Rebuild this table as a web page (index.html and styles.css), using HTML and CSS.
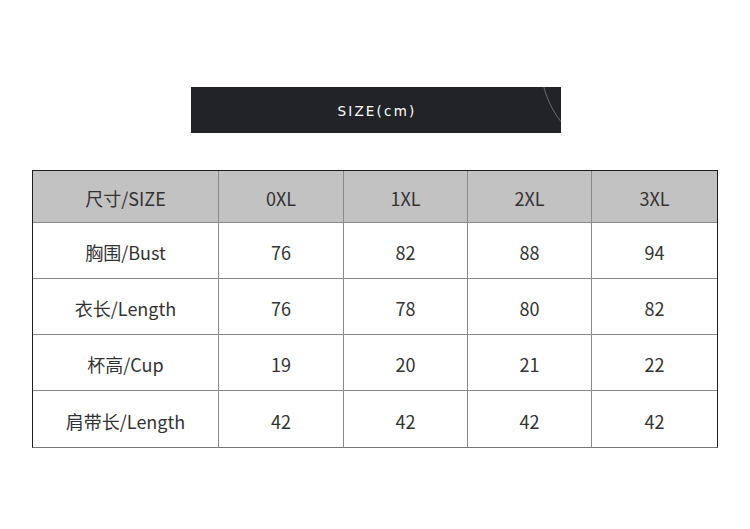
FILE: index.html
```html
<!DOCTYPE html>
<html lang="zh">
<head>
<meta charset="utf-8">
<title>SIZE</title>
<link rel="stylesheet" href="styles.css">
</head>
<body>
<div class="page">
  <div class="banner"><span class="banner-text">SIZE(cm)</span></div>
  <div class="size-table">
    <div class="cell head">尺寸/SIZE</div>
    <div class="cell head">0XL</div>
    <div class="cell head">1XL</div>
    <div class="cell head">2XL</div>
    <div class="cell head">3XL</div>

    <div class="cell">胸围/Bust</div>
    <div class="cell">76</div>
    <div class="cell">82</div>
    <div class="cell">88</div>
    <div class="cell">94</div>

    <div class="cell">衣长/Length</div>
    <div class="cell">76</div>
    <div class="cell">78</div>
    <div class="cell">80</div>
    <div class="cell">82</div>

    <div class="cell">杯高/Cup</div>
    <div class="cell">19</div>
    <div class="cell">20</div>
    <div class="cell">21</div>
    <div class="cell">22</div>

    <div class="cell">肩带长/Length</div>
    <div class="cell">42</div>
    <div class="cell">42</div>
    <div class="cell">42</div>
    <div class="cell">42</div>
  </div>
</div>
</body>
</html>
```
FILE: styles.css
```css
* { box-sizing: border-box; }
html, body { margin: 0; padding: 0; background: #fff; }
body { width: 750px; height: 529px; overflow: hidden; }

.page {
  padding-top: 87px;
  display: flex;
  flex-direction: column;
}

.banner {
  position: relative;
  overflow: hidden;
  margin-left: 191px;
  width: 370px;
  height: 46px;
  background: #222327;
  display: flex;
  align-items: center;
  justify-content: center;
}
.banner::after {
  content: "";
  position: absolute;
  left: 349px;
  top: -123px;
  width: 194px;
  height: 194px;
  border-radius: 50%;
  border: 1.5px solid #6a6b6f;
}
.banner-text {
  color: #fff;
  font-family: "DejaVu Sans", sans-serif;
  font-size: 13.5px;
  letter-spacing: 2.2px;
  padding-left: 2px;
  padding-top: 1px;
}

.size-table {
  margin-top: 37px;
  margin-left: 32px;
  width: 686px;
  display: grid;
  grid-template-columns: 185px 124px 123px 123px 125px;
  grid-template-rows: 51px 55px 55px 55px 56px;
  gap: 1px;
  background: #8a8a8a;
  border-top: 1px solid #1e1e1e;
  border-left: 1px solid #1e1e1e;
  border-right: 1px solid #1e1e1e;
  border-bottom: 1px solid #777;
}
.cell {
  background: #fff;
  display: flex;
  align-items: center;
  justify-content: center;
  font-family: "Noto Sans CJK SC", "Noto Sans", sans-serif;
  font-size: 18px;
  color: #333;
  padding-top: 3px;
}
.cell.head {
  background: #c2c2c2;
}
```
